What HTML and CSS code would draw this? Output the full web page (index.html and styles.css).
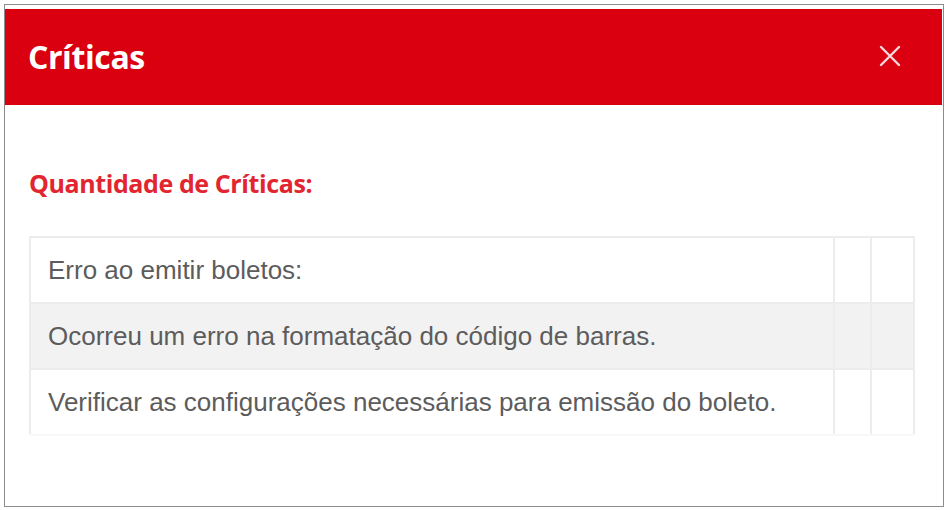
FILE: index.html
```html
<!DOCTYPE html>
<html lang="pt-BR">
<head>
    <meta charset="UTF-8">
    <meta name="viewport" content="width=device-width, initial-scale=1.0">
    <title>Críticas</title>
    <link rel="stylesheet" href="styles.css">
</head>
<body>
    <div class="modal">
        <div class="modal-header">
            <h2 class="modal-title">Críticas</h2>
            <button class="close-btn" type="button" aria-label="Fechar">
                <svg width="22" height="22" viewBox="0 0 22 22">
                    <path d="M2 2 L20 20 M20 2 L2 20" stroke="currentColor" stroke-width="2.4" stroke-linecap="round"/>
                </svg>
            </button>
        </div>

        <div class="modal-body">
            <h3 class="section-title">Quantidade de Críticas:</h3>

            <table class="criticas-table">
                <tr>
                    <td>Erro ao emitir boletos:</td>
                    <td class="col-small"></td>
                    <td class="col-last"></td>
                </tr>
                <tr class="striped">
                    <td>Ocorreu um erro na formatação do código de barras.</td>
                    <td class="col-small"></td>
                    <td class="col-last"></td>
                </tr>
                <tr>
                    <td>Verificar as configurações necessárias para emissão do boleto.</td>
                    <td class="col-small"></td>
                    <td class="col-last"></td>
                </tr>
            </table>
        </div>
    </div>
</body>
</html>
```

FILE: styles.css
```css
* {
    margin: 0;
    padding: 0;
    box-sizing: border-box;
}

body {
    font-family: 'Open Sans', 'Liberation Sans', sans-serif;
    background: #fff;
    padding: 4px 5px 0 4px;
}

.modal {
    border: 1px solid #8c8c8c;
    height: 503px;
    padding-top: 4px;
    background: #fff;
}

.modal-header {
    background: #db000f;
    height: 96px;
    margin-right: 1px;
    display: flex;
    align-items: center;
    justify-content: space-between;
    padding: 0 41px 2px 23px;
}

.modal-title {
    color: #fff;
    font-size: 32px;
    font-weight: 700;
    letter-spacing: -0.4px;
}

.close-btn {
    background: none;
    border: none;
    color: #f5d9dc;
    display: flex;
    cursor: pointer;
}

.modal-body {
    padding: 61px 28px 0 24px;
}

.section-title {
    color: #e2262f;
    font-size: 25px;
    font-weight: 700;
    margin-bottom: 36px;
    letter-spacing: -0.4px;
}

.criticas-table {
    width: 100%;
    border-collapse: collapse;
    font-family: 'Liberation Sans', Arial, sans-serif;
    font-size: 26px;
    color: #5c5c5c;
}

.criticas-table td {
    height: 66px;
    border: 2px solid #ececec;
    padding: 0 17px;
}

.criticas-table tr:last-child td {
    border-bottom-color: #f8f8f8;
}

.criticas-table .col-small {
    width: 37px;
    padding: 0;
}

.criticas-table .col-last {
    width: 43px;
    padding: 0;
}

.striped td {
    background: #f2f2f2;
}
```
